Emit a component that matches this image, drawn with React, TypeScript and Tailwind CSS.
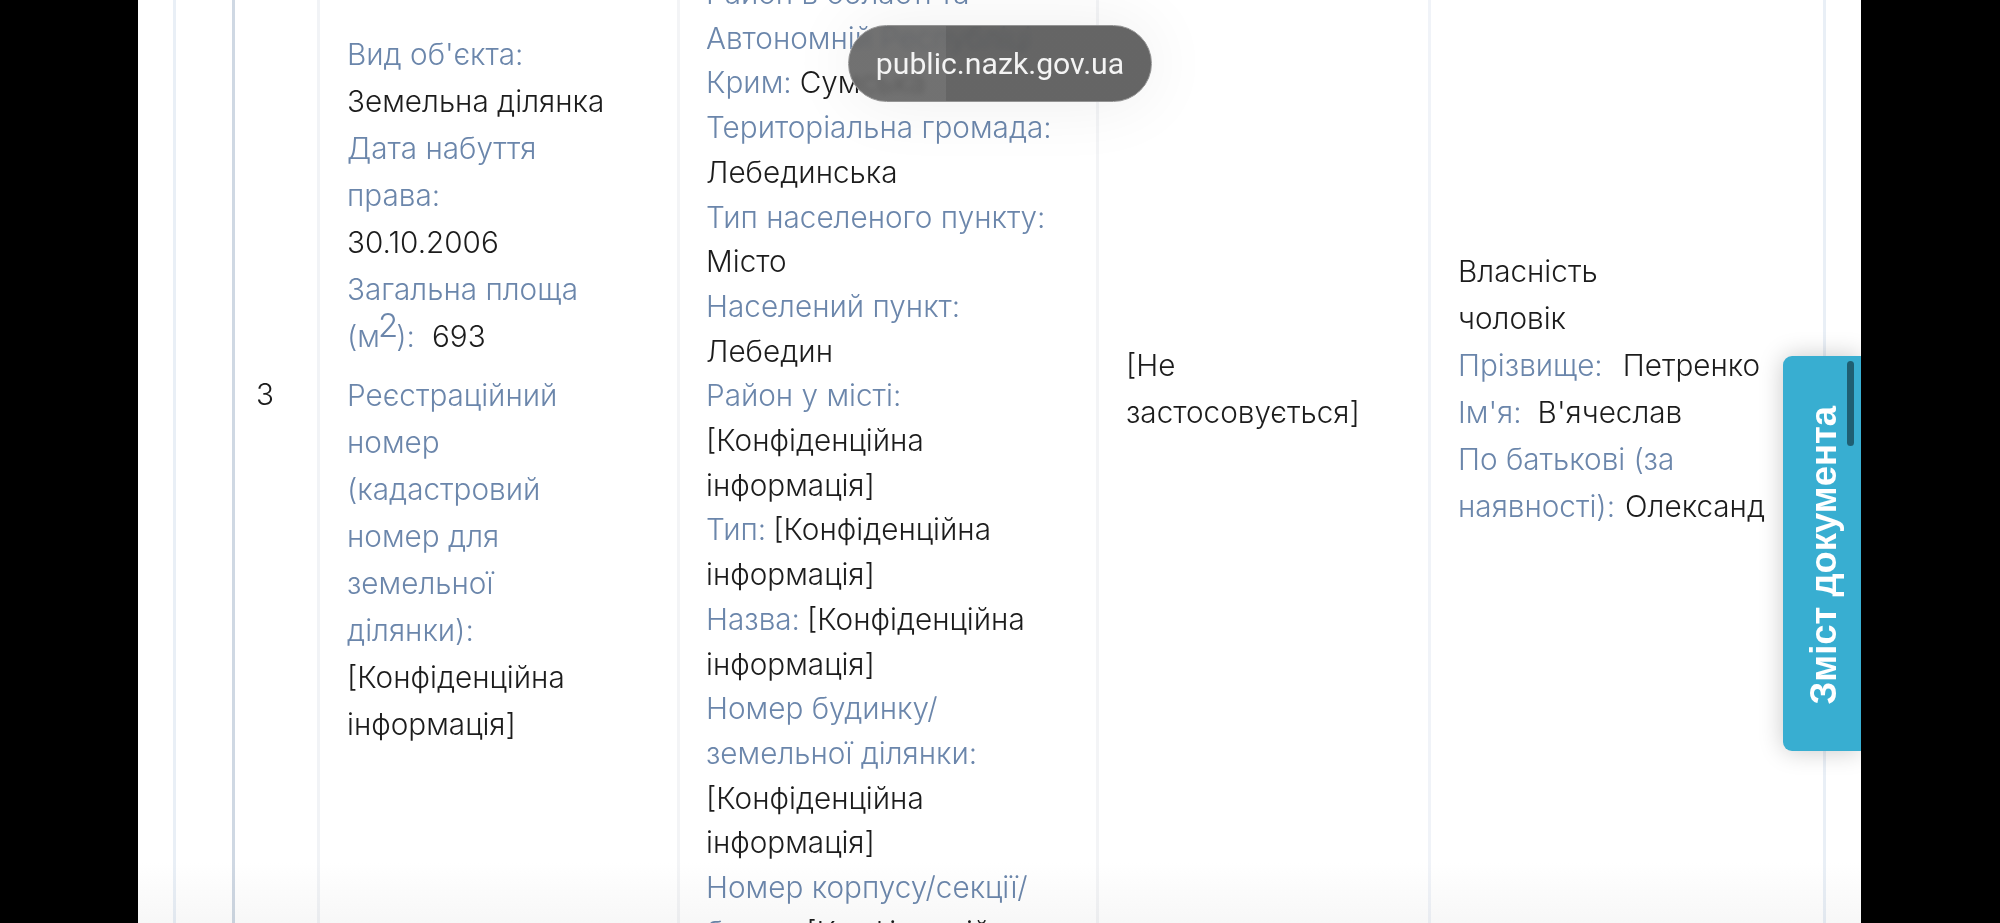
import React from "react";

type Line = { label?: React.ReactNode; value?: string; gap?: string };

const labelCls = "text-[#6b86ab]";
const valueCls = "text-[#1c1c1c]";

const objectLines: Line[] = [
  { label: "Вид об'єкта:" },
  { value: "Земельна ділянка" },
  { label: "Дата набуття" },
  { label: "права:" },
  { value: "30.10.2006" },
  { label: "Загальна площа" },
  {
    label: (
      <>
        (м<span className="relative -top-[10px] -mx-[2px] text-[33px] leading-none">2</span>):
      </>
    ),
    value: "693",
    gap: "ml-[17px]",
  },
  { label: "Реєстраційний" },
  { label: "номер" },
  { label: "(кадастровий" },
  { label: "номер для" },
  { label: "земельної" },
  { label: "ділянки):" },
  { value: "[Конфіденційна" },
  { value: "інформація]" },
];

const addressLines: Line[] = [
  { label: "Район в області та" },
  { label: "Автономній Республіці" },
  { label: "Крим:", value: "Сумська", gap: "ml-[8px]" },
  { label: "Територіальна громада:" },
  { value: "Лебединська" },
  { label: "Тип населеного пункту:" },
  { value: "Місто" },
  { label: "Населений пункт:" },
  { value: "Лебедин" },
  { label: "Район у місті:" },
  { value: "[Конфіденційна" },
  { value: "інформація]" },
  { label: "Тип:", value: "[Конфіденційна", gap: "ml-[7px]" },
  { value: "інформація]" },
  { label: "Назва:", value: "[Конфіденційна", gap: "ml-[7px]" },
  { value: "інформація]" },
  { label: "Номер будинку/" },
  { label: "земельної ділянки:" },
  { value: "[Конфіденційна" },
  { value: "інформація]" },
  { label: "Номер корпусу/секції/" },
  { label: "блоку:", value: "[Конфіденційна", gap: "ml-[8px]" },
];

const ownerLines: Line[] = [
  { value: "Власність" },
  { value: "чоловік" },
  { label: "Прізвище:", value: "Петренко", gap: "ml-[20px]" },
  { label: "Ім'я:", value: "В'ячеслав", gap: "ml-[16px]" },
  { label: "По батькові (за" },
  { label: "наявності):", value: "Олександ", gap: "ml-[10px]" },
];

function Lines({ lines, leading }: { lines: Line[]; leading: string }) {
  return (
    <div className={leading}>
      {lines.map((line, i) => (
        <div key={i} className={`whitespace-nowrap ${i === 7 && lines === objectLines ? "mt-[12px]" : ""}`}>
          {line.label && <span className={labelCls}>{line.label}</span>}
          {line.value && <span className={`${valueCls} ${line.gap || ""}`}>{line.value}</span>}
        </div>
      ))}
    </div>
  );
}

export default function App() {
  return (
    <div className="flex h-[923px] w-[2000px] overflow-hidden bg-black font-['Inter',sans-serif] text-[29.7px] font-light">
      <div className="w-[138px] shrink-0" />

      <div className="relative flex-1 overflow-hidden bg-white pl-[35px]">
        <div className="flex h-full w-[1653px] border-r-[3px] border-[#e9eff6]">
          <div className="w-[59px] shrink-0 border-l-[3px] border-[#e9eff6]" />
          <div className="flex w-[85px] shrink-0 items-center border-l-[3px] border-[#cfd8e3] pb-[134px] pl-[21px] text-[#1c1c1c]">
            3
          </div>
          <div className="flex w-[360px] shrink-0 items-center border-l-[3px] border-[#f1f3f6] pb-[144px] pl-[27px]">
            <Lines lines={objectLines} leading="leading-[47px]" />
          </div>
          <div className="w-[419px] shrink-0 border-l-[3px] border-[#f3f4f6] pl-[26px]">
            <div className="-mt-[29px]">
              <Lines lines={addressLines} leading="leading-[44.7px]" />
            </div>
          </div>
          <div className="flex w-[332px] shrink-0 items-center border-l-[3px] border-[#f3f4f6] pb-[145px] pl-[27px]">
            <Lines
              lines={[{ value: "[Не" }, { value: "застосовується]" }]}
              leading="leading-[47px]"
            />
          </div>
          <div className="flex w-[395px] shrink-0 items-center border-l-[3px] border-[#f0f3f8] pb-[145px] pl-[27px]">
            <Lines lines={ownerLines} leading="leading-[47px]" />
          </div>
        </div>

        {/* browser chrome haze at the bottom */}
        <div className="absolute inset-x-0 bottom-0 h-[60px] bg-gradient-to-b from-white to-[#f7f7f7] mix-blend-multiply" />

        {/* side tab */}
        <div className="absolute top-[356px] right-0 flex h-[395px] w-[78px] items-center justify-center rounded-l-[9px] bg-[#38aed1] shadow-[0_0_24px_rgba(0,0,0,0.22)]">
          <span className="relative top-[2px] left-[2px] rotate-180 font-['Liberation_Sans',sans-serif] text-[36.4px] font-bold whitespace-nowrap text-white [writing-mode:vertical-rl]">
            Зміст документа
          </span>
          <div className="absolute top-[5px] right-[7px] h-[85px] w-[7px] rounded-full bg-[#1f5f72]" />
        </div>

        {/* url toast */}
        <div className="absolute top-[25px] left-[710px] flex h-[77px] w-[304px] items-center justify-center rounded-full border border-[#949494] bg-[linear-gradient(90deg,rgba(98,98,98,0.9)_32%,rgba(88,88,88,0.92)_32%)] font-['Roboto',sans-serif] text-[30.2px] font-normal text-[#f4f4f4] shadow-[0_0_70px_rgba(0,0,0,0.07)] backdrop-blur-[3px]">
          public.nazk.gov.ua
        </div>
      </div>

      <div className="w-[139px] shrink-0" />
    </div>
  );
}
